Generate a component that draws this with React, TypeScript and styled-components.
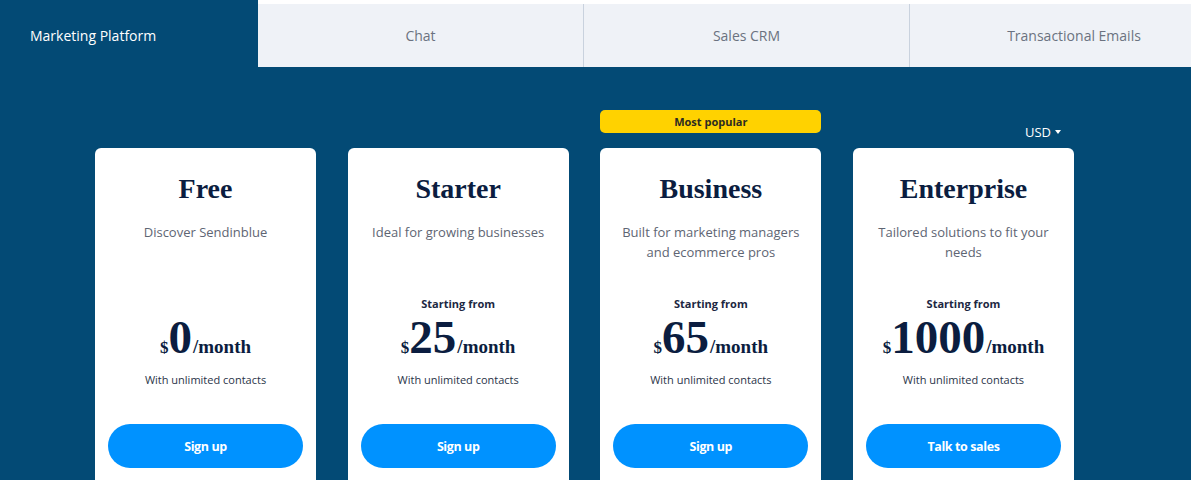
import React from "react";
import styled, { createGlobalStyle } from "styled-components";

const Global = createGlobalStyle`
  html, body { margin: 0; padding: 0; }
  body {
    background: #ffffff;
    font-family: "Open Sans", "Noto Sans", sans-serif;
    width: 1191px;
    height: 480px;
    overflow: hidden;
  }
`;

const Page = styled.div`
  width: 1191px;
  height: 480px;
  display: flex;
  flex-direction: column;
  overflow: hidden;
`;

const TabBar = styled.div`
  display: flex;
  height: 67px;
  background: #ffffff;
  flex-shrink: 0;
`;

const Tab = styled.div<{ $active?: boolean; $w: number; $last?: boolean }>`
  width: ${(p) => p.$w}px;
  flex-shrink: 0;
  display: flex;
  align-items: center;
  justify-content: ${(p) => (p.$active ? "flex-start" : "center")};
  padding: ${(p) => (p.$active ? "4px 0 0 30px" : "0")};
  box-sizing: border-box;
  font-size: 14px;
  margin-top: ${(p) => (p.$active ? "0" : "4px")};
  background: ${(p) => (p.$active ? "#034a75" : "#eff2f7")};
  color: ${(p) => (p.$active ? "#ffffff" : "#6b7280")};
  border-right: ${(p) => (p.$active || p.$last ? "none" : "1px solid #c9d2de")};
`;

const Main = styled.div`
  flex: 1;
  background: #034a75;
  padding: 43px 0 0 95px;
  display: flex;
  gap: 31.67px;
`;

const Column = styled.div`
  width: 221px;
  display: flex;
  flex-direction: column;
`;

const Slot = styled.div<{ $end?: boolean }>`
  height: 38px;
  display: flex;
  justify-content: ${(p) => (p.$end ? "flex-end" : "stretch")};
  align-items: ${(p) => (p.$end ? "flex-end" : "flex-start")};
`;

const Badge = styled.div`
  flex: 1;
  height: 23px;
  border-radius: 5px;
  background: #ffd200;
  color: #2b2a22;
  font-size: 11px;
  font-weight: 700;
  display: flex;
  align-items: center;
  justify-content: center;
`;

const Currency = styled.div`
  color: #ffffff;
  font-size: 13px;
  display: flex;
  align-items: center;
  gap: 4px;
  padding: 0 13px 7px 0;
`;

const Caret = styled.span`
  width: 0;
  height: 0;
  border-left: 3.5px solid transparent;
  border-right: 3.5px solid transparent;
  border-top: 4px solid #ffffff;
`;

const Card = styled.div`
  background: #ffffff;
  border-radius: 6px 6px 0 0;
  height: 400px;
  padding: 24px 13px 0;
  display: flex;
  flex-direction: column;
  align-items: center;
  text-align: center;
  color: #0b1d40;
`;

const Title = styled.h2`
  margin: 0;
  font-family: "Liberation Serif", "Times New Roman", serif;
  font-weight: 700;
  font-size: 28px;
  line-height: 34px;
`;

const Desc = styled.p`
  margin: 16px 0 0;
  height: 40px;
  font-size: 13px;
  line-height: 20px;
  color: #5e6573;
  padding: 0 4px;
`;

const Starting = styled.div<{ $hidden?: boolean }>`
  margin-top: 34px;
  font-size: 11px;
  font-weight: 700;
  line-height: 16px;
  color: #1c2742;
  visibility: ${(p) => (p.$hidden ? "hidden" : "visible")};
`;

const PriceRow = styled.div`
  display: flex;
  align-items: baseline;
  justify-content: center;
  font-family: "Liberation Serif", "Times New Roman", serif;
  font-weight: 700;
  height: 50px;
  line-height: 50px;
  margin-top: 0;
`;

const Dollar = styled.span`
  font-size: 17px;
`;

const Amount = styled.span`
  font-size: 47px;
`;

const Per = styled.span`
  font-size: 19px;
  margin-left: 1px;
`;

const Contacts = styled.div`
  margin-top: 10px;
  font-size: 11px;
  line-height: 16px;
  color: #2a3448;
`;

const Button = styled.button`
  margin-top: 36px;
  width: 195px;
  height: 44px;
  border: none;
  border-radius: 22px;
  background: #0092ff;
  color: #ffffff;
  font-family: "Open Sans", sans-serif;
  font-weight: 700;
  font-size: 12.5px;
  letter-spacing: -0.4px;
  cursor: pointer;
`;

type Plan = {
  name: string;
  desc: string;
  price: string;
  starting: boolean;
  cta: string;
  top?: "badge" | "usd";
};

const plans: Plan[] = [
  { name: "Free", desc: "Discover Sendinblue", price: "0", starting: false, cta: "Sign up" },
  { name: "Starter", desc: "Ideal for growing businesses", price: "25", starting: true, cta: "Sign up" },
  {
    name: "Business",
    desc: "Built for marketing managers and ecommerce pros",
    price: "65",
    starting: true,
    cta: "Sign up",
    top: "badge",
  },
  {
    name: "Enterprise",
    desc: "Tailored solutions to fit your needs",
    price: "1000",
    starting: true,
    cta: "Talk to sales",
    top: "usd",
  },
];

const tabs = [
  { label: "Marketing Platform", w: 258, active: true },
  { label: "Chat", w: 326 },
  { label: "Sales CRM", w: 326 },
  { label: "Transactional Emails", w: 328, last: true },
];

export default function App() {
  return (
    <Page>
      <Global />
      <TabBar>
        {tabs.map((t) => (
          <Tab key={t.label} $active={t.active} $w={t.w} $last={t.last}>
            {t.label}
          </Tab>
        ))}
      </TabBar>
      <Main>
        {plans.map((p) => (
          <Column key={p.name}>
            <Slot $end={p.top === "usd"}>
              {p.top === "badge" && <Badge>Most popular</Badge>}
              {p.top === "usd" && (
                <Currency>
                  USD <Caret />
                </Currency>
              )}
            </Slot>
            <Card>
              <Title>{p.name}</Title>
              <Desc>{p.desc}</Desc>
              <Starting $hidden={!p.starting}>Starting from</Starting>
              <PriceRow>
                <Dollar>$</Dollar>
                <Amount>{p.price}</Amount>
                <Per>/month</Per>
              </PriceRow>
              <Contacts>With unlimited contacts</Contacts>
              <Button>{p.cta}</Button>
            </Card>
          </Column>
        ))}
      </Main>
    </Page>
  );
}
